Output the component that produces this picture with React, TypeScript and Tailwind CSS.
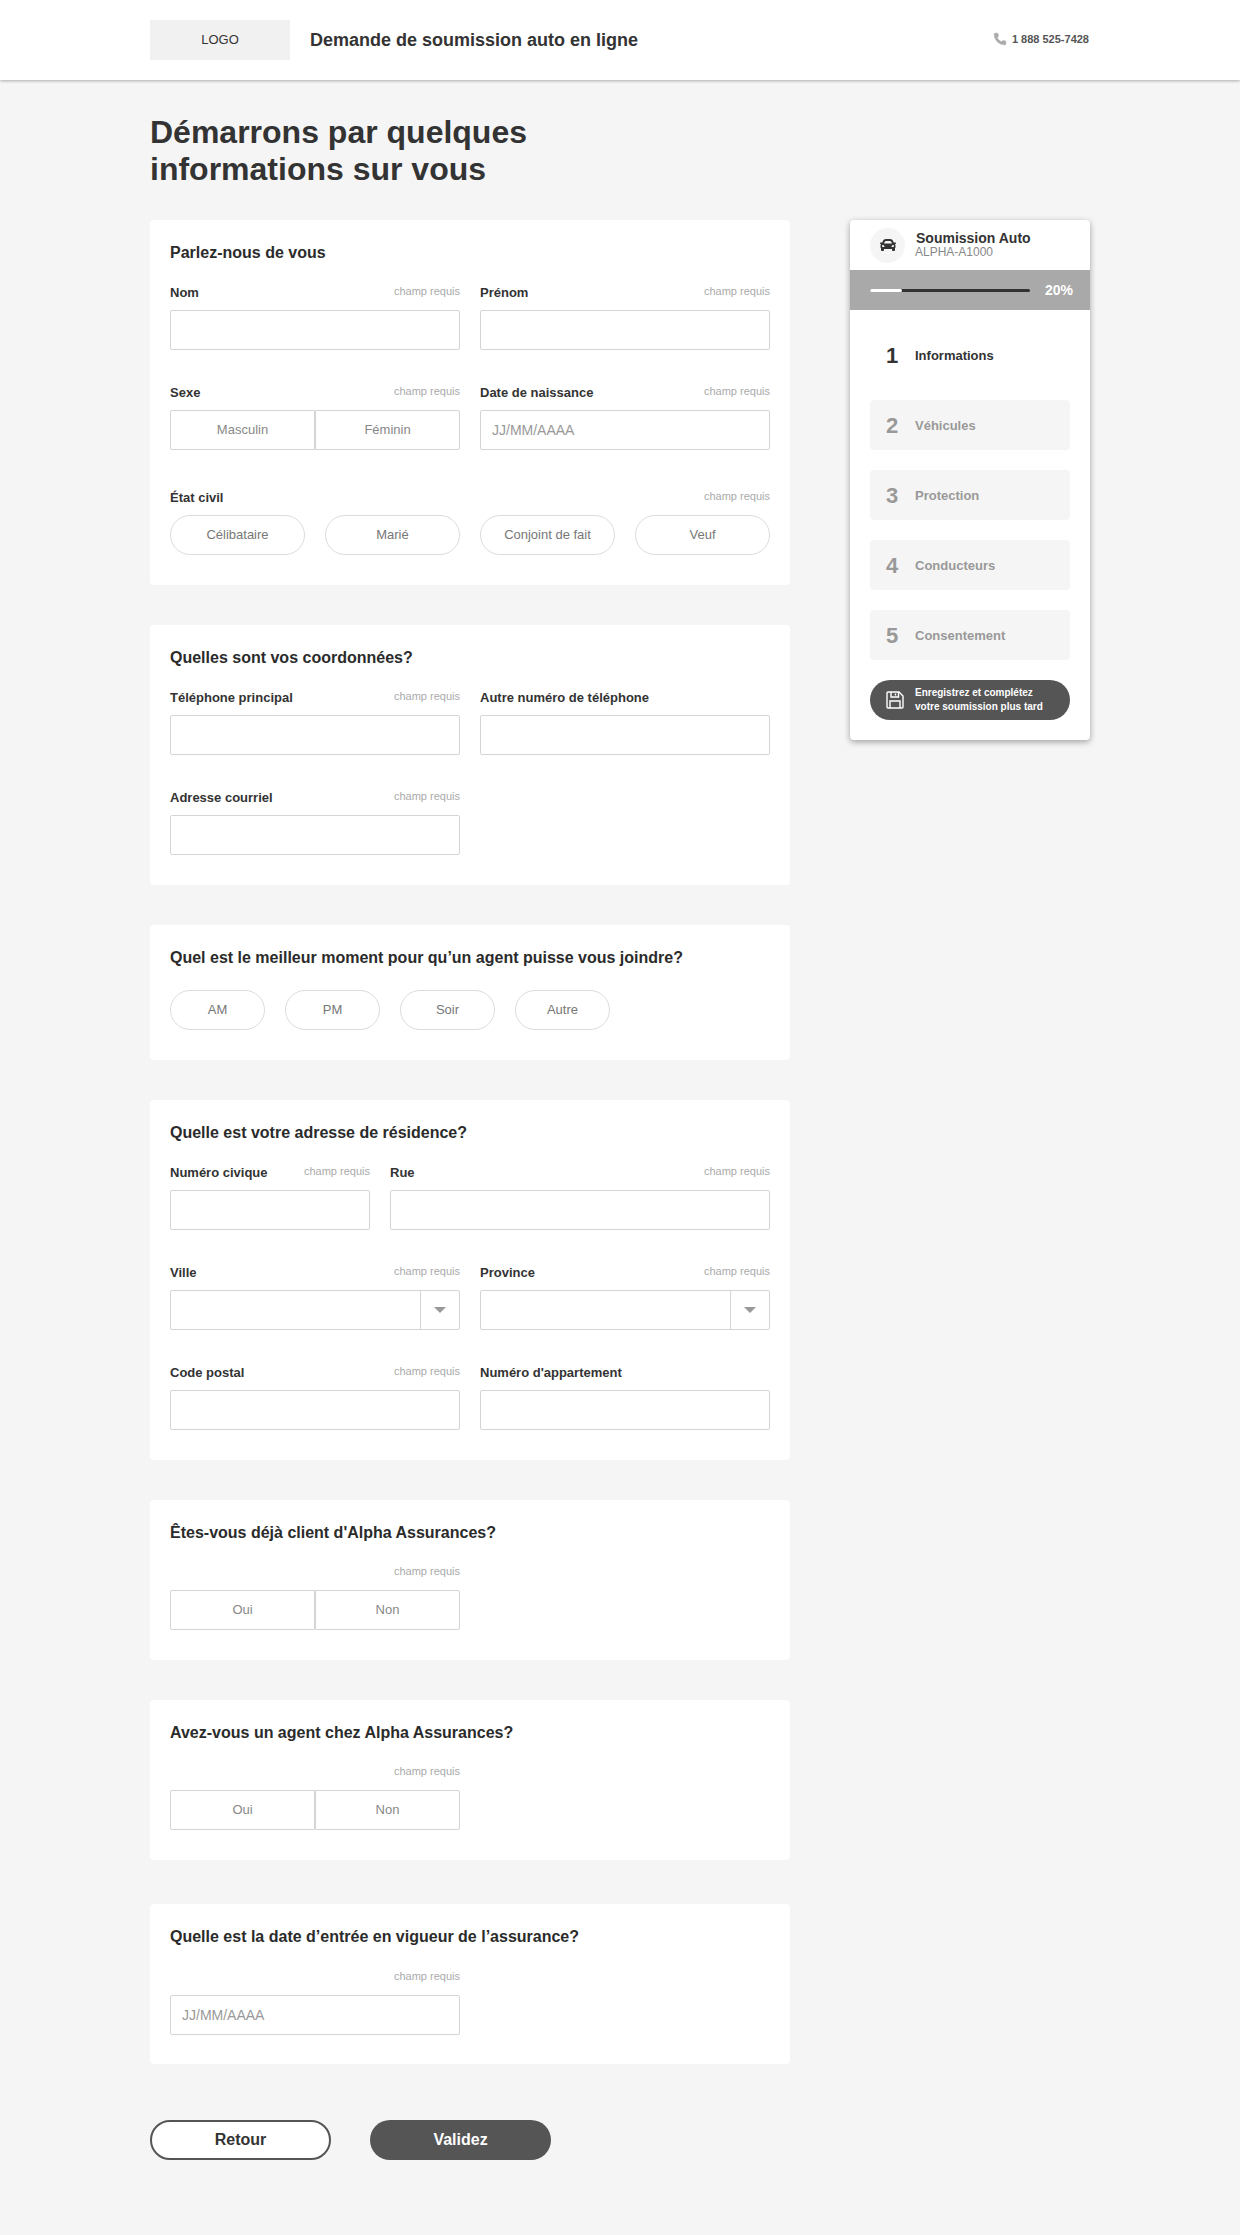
import { FaCar } from "react-icons/fa"
import { Phone } from "lucide-react"

const required = "champ requis"

function Label({ text, required: isRequired }: { text?: string; required?: boolean }) {
    return (
        <div className="flex h-5 items-center justify-between mb-2">
            <span className="text-[13px] font-bold text-[#333] mt-[2px]">{text}</span>
            {isRequired && <span className="text-[11px] text-[#aaa] -mt-[2px]">{required}</span>}
        </div>
    )
}

function Input({ placeholder }: { placeholder?: string }) {
    return (
        <div className="h-10 bg-white border border-[#d5d5d5] rounded-[2px] px-[11px] flex items-center text-[14px] text-[#999]">
            {placeholder}
        </div>
    )
}

function Field({ label, isRequired, placeholder }: { label?: string; isRequired?: boolean; placeholder?: string }) {
    return (
        <div>
            <Label text={label} required={isRequired} />
            <Input placeholder={placeholder} />
        </div>
    )
}

function SelectField({ label }: { label: string }) {
    return (
        <div>
            <Label text={label} required />
            <div className="h-10 bg-white border border-[#d5d5d5] rounded-[2px] flex justify-end">
                <div className="w-[39px] border-l border-[#d5d5d5] flex items-center justify-center">
                    <div className="w-0 h-0 border-x-[6px] border-x-transparent border-t-[6px] border-t-[#999]"></div>
                </div>
            </div>
        </div>
    )
}

function Toggle({ options }: { options: string[] }) {
    return (
        <div className="h-10 flex bg-white">
            {options.map((o, i) => (
                <div
                    key={o}
                    className={"flex-1 flex items-center justify-center border border-[#d5d5d5] text-[13px] text-[#888] " + (i === 0 ? "rounded-l-[2px]" : "rounded-r-[2px]")}
                >
                    {o}
                </div>
            ))}
        </div>
    )
}

function Pill({ text, className }: { text: string; className?: string }) {
    return (
        <div className={"h-10 rounded-full border border-[#dcdcdc] bg-white flex items-center justify-center text-[13px] text-[#777] " + (className ?? "")}>
            {text}
        </div>
    )
}

function Card({ title, children, className }: { title: string; children: React.ReactNode; className?: string }) {
    return (
        <section className={"bg-white rounded-[4px] px-5 pt-5 " + (className ?? "pb-[30px]")}>
            <h2 className="h-6 leading-[26px] text-[16px] font-bold text-[#2b2b2b] mb-[18px]">{title}</h2>
            {children}
        </section>
    )
}

function YesNo({ title, className }: { title: string; className?: string }) {
    return (
        <Card title={title} className={className}>
            <div className="w-[290px]">
                <Label required />
                <Toggle options={["Oui", "Non"]} />
            </div>
        </Card>
    )
}

const steps = [
    { n: 2, label: "Véhicules" },
    { n: 3, label: "Protection" },
    { n: 4, label: "Conducteurs" },
    { n: 5, label: "Consentement" },
]

function Sidebar() {
    return (
        <aside className="w-[240px] h-[520px] bg-white rounded-[4px] shadow-[0_2px_6px_rgba(0,0,0,0.35)] overflow-hidden">
            <div className="h-[50px] flex items-center pl-5">
                <div className="w-[35px] h-[35px] rounded-full bg-[#f5f5f5] flex items-center justify-center">
                    <FaCar className="text-[#333] text-[16px]" />
                </div>
                <div className="ml-[10px]">
                    <div className="text-[14px] leading-[15px] font-bold text-[#333] ml-px">Soumission Auto</div>
                    <div className="text-[12px] leading-[13px] text-[#888]">ALPHA-A1000</div>
                </div>
            </div>
            <div className="h-10 bg-[#a9a9a9] flex items-center pl-5">
                <div className="w-40 h-[3px] rounded-full bg-[#333]">
                    <div className="w-8 h-[3px] rounded-full bg-white"></div>
                </div>
                <span className="ml-[15px] text-[14px] font-bold text-white">20%</span>
            </div>
            <div className="px-5 pt-5">
                <div className="h-[50px] flex items-center pl-4 mb-5">
                    <span className="w-[29px] text-[22px] font-bold text-[#333]">1</span>
                    <span className="text-[13px] font-bold text-[#333] mt-[2px]">Informations</span>
                </div>
                {steps.map((s) => (
                    <div key={s.n} className="h-[50px] bg-[#f5f5f5] rounded-[4px] flex items-center pl-4 mb-5">
                        <span className="w-[29px] text-[22px] font-bold text-[#999]">{s.n}</span>
                        <span className="text-[13px] font-bold text-[#999] mt-[2px]">{s.label}</span>
                    </div>
                ))}
                <div className="h-10 bg-[#555] rounded-full flex items-center pl-4 text-white">
                    <svg width="18" height="18" viewBox="0 0 18 18" fill="none" stroke="white" strokeWidth="1.4" className="shrink-0">
                        <path d="M1 2a1 1 0 0 1 1-1h11l4 4v11a1 1 0 0 1-1 1H2a1 1 0 0 1-1-1z" />
                        <path d="M5 1v5h7.5V1M9.5 2.5v2" />
                        <path d="M4 17v-7h10v7" />
                    </svg>
                    <div className="ml-[11px] text-[10px] leading-[14px] font-bold">
                        Enregistrez et complétez<br />votre soumission plus tard
                    </div>
                </div>
            </div>
        </aside>
    )
}

export default function App() {
    return (
        <div className="min-h-[2235px] bg-[#f5f5f5] font-['Liberation_Sans',Arial,sans-serif]">
            <header className="h-20 bg-white shadow-[0_1px_3px_rgba(0,0,0,0.3)]">
                <div className="w-[940px] mx-auto h-full flex items-center">
                    <div className="w-[140px] h-10 bg-[#f1f1f1] flex items-center justify-center text-[13px] text-[#333]">LOGO</div>
                    <div className="ml-5 pt-px text-[18px] font-bold text-[#333]">Demande de soumission auto en ligne</div>
                    <div className="ml-auto mr-px flex items-center -mt-[2px]">
                        <Phone size={14} strokeWidth={1} className="text-[#aaa] fill-[#aaa]" />
                        <span className="ml-[5px] text-[11px] font-bold text-[#555]">1 888 525-7428</span>
                    </div>
                </div>
            </header>
            <main className="w-[940px] mx-auto">
                <h1 className="pt-[34px] text-[32px] leading-[37px] font-bold text-[#333] mb-8">
                    Démarrons par quelques<br />informations sur vous
                </h1>
                <div className="flex justify-between items-start">
                    <div className="w-[640px]">
                        <Card title="Parlez-nous de vous" className="pb-[30px] mb-10">
                            <div className="grid grid-cols-2 gap-x-5 gap-y-8">
                                <Field label="Nom" isRequired />
                                <Field label="Prénom" isRequired />
                                <div>
                                    <Label text="Sexe" required />
                                    <Toggle options={["Masculin", "Féminin"]} />
                                </div>
                                <Field label="Date de naissance" isRequired placeholder="JJ/MM/AAAA" />
                            </div>
                            <div className="mt-[37px]">
                                <Label text="État civil" required />
                                <div className="grid grid-cols-4 gap-5">
                                    <Pill text="Célibataire" />
                                    <Pill text="Marié" />
                                    <Pill text="Conjoint de fait" />
                                    <Pill text="Veuf" />
                                </div>
                            </div>
                        </Card>

                        <Card title="Quelles sont vos coordonnées?" className="pb-[30px] mb-10">
                            <div className="grid grid-cols-2 gap-x-5 gap-y-8">
                                <Field label="Téléphone principal" isRequired />
                                <Field label="Autre numéro de téléphone" />
                                <Field label="Adresse courriel" isRequired />
                            </div>
                        </Card>

                        <Card title="Quel est le meilleur moment pour qu’un agent puisse vous joindre?" className="pb-[30px] mb-10">
                            <div className="flex gap-5 mt-[21px]">
                                <Pill text="AM" className="w-[95px]" />
                                <Pill text="PM" className="w-[95px]" />
                                <Pill text="Soir" className="w-[95px]" />
                                <Pill text="Autre" className="w-[95px]" />
                            </div>
                        </Card>

                        <Card title="Quelle est votre adresse de résidence?" className="pb-[30px] mb-10">
                            <div className="grid grid-cols-[200px_380px] gap-x-5">
                                <Field label="Numéro civique" isRequired />
                                <Field label="Rue" isRequired />
                            </div>
                            <div className="grid grid-cols-2 gap-x-5 gap-y-8 mt-8">
                                <SelectField label="Ville" />
                                <SelectField label="Province" />
                                <Field label="Code postal" isRequired />
                                <Field label="Numéro d'appartement" />
                            </div>
                        </Card>

                        <YesNo title="Êtes-vous déjà client d'Alpha Assurances?" className="pb-[30px] mb-10" />
                        <YesNo title="Avez-vous un agent chez Alpha Assurances?" className="pb-[30px] mb-11" />

                        <Card title="Quelle est la date d’entrée en vigueur de l’assurance?" className="pb-[29px]">
                            <div className="w-[290px] pt-px">
                                <Field isRequired placeholder="JJ/MM/AAAA" />
                            </div>
                        </Card>

                        <div className="flex gap-[39px] mt-14">
                            <button type="button" className="w-[181px] h-10 rounded-full border-2 border-[#555] bg-white text-[16px] font-bold text-[#333]">Retour</button>
                            <button type="button" className="w-[181px] h-10 rounded-full bg-[#555] text-[16px] font-bold text-white">Validez</button>
                        </div>
                    </div>
                    <Sidebar />
                </div>
            </main>
        </div>
    )
}
